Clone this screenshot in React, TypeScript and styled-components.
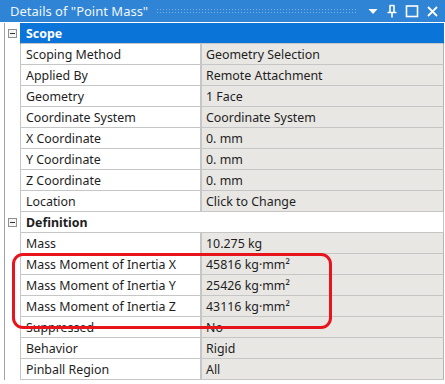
import styled, { createGlobalStyle } from "styled-components";

type Item =
  | { kind: "group"; label: string; selected?: boolean }
  | { kind: "prop"; name: string; value: string };

const ITEMS: Item[] = [
  { kind: "group", label: "Scope", selected: true },
  { kind: "prop", name: "Scoping Method", value: "Geometry Selection" },
  { kind: "prop", name: "Applied By", value: "Remote Attachment" },
  { kind: "prop", name: "Geometry", value: "1 Face" },
  { kind: "prop", name: "Coordinate System", value: "Coordinate System" },
  { kind: "prop", name: "X Coordinate", value: "0. mm" },
  { kind: "prop", name: "Y Coordinate", value: "0. mm" },
  { kind: "prop", name: "Z Coordinate", value: "0. mm" },
  { kind: "prop", name: "Location", value: "Click to Change" },
  { kind: "group", label: "Definition" },
  { kind: "prop", name: "Mass", value: "10.275 kg" },
  { kind: "prop", name: "Mass Moment of Inertia X", value: "45816 kg·mm²" },
  { kind: "prop", name: "Mass Moment of Inertia Y", value: "25426 kg·mm²" },
  { kind: "prop", name: "Mass Moment of Inertia Z", value: "43116 kg·mm²" },
  { kind: "prop", name: "Suppressed", value: "No" },
  { kind: "prop", name: "Behavior", value: "Rigid" },
  { kind: "prop", name: "Pinball Region", value: "All" },
];

export default function App() {
  return <>
    <GlobalStyle />
    <Panel>
      <TitleBar>
        <Title>Details of "Point Mass"</Title>
        <Grip />
        <TitleButtons>
          <svg width="12" height="12" viewBox="0 0 12 12">
            <path d="M1.5 4 L10.5 4 L6 9 Z" fill="#fff" />
          </svg>
          <svg width="12" height="14" viewBox="0 0 12 14">
            <path d="M3.5 1.5 H8.5 M4 1.5 V8 M8 1.5 V8 M1.5 8.5 H10.5 M6 8.5 V13.5" stroke="#fff" strokeWidth="1.6" fill="none" />
          </svg>
          <svg width="14" height="14" viewBox="0 0 14 14">
            <rect x="1.5" y="2" width="11" height="10.5" stroke="#fff" strokeWidth="1.6" fill="none" />
          </svg>
          <svg width="13" height="13" viewBox="0 0 13 13">
            <path d="M2 2 L11 11 M11 2 L2 11" stroke="#fff" strokeWidth="1.8" />
          </svg>
        </TitleButtons>
      </TitleBar>

      <Table>
        {ITEMS.map((item, i) => item.kind === "group"
          ? <Row key={i}>
              <Gutter><Toggle /></Gutter>
              <GroupCell selected={!!item.selected}>{item.label}</GroupCell>
            </Row>
          : <Row key={i}>
              <Gutter />
              <NameCell>{item.name}</NameCell>
              <ValueCell>{item.value}</ValueCell>
            </Row>
        )}
      </Table>

      <Highlight />
    </Panel>
  </>;
}

const GlobalStyle = createGlobalStyle`
  body {
    margin: 0;
    background: #fff;
    font-family: "Noto Sans", "Open Sans", sans-serif;
  }
`;

const Panel = styled.div`
  position: relative;
  width: 445px;
  height: 384px;
  background: #fff;
  overflow: hidden;
`;

const TitleBar = styled.div`
  height: 22px;
  background: #2f84d5;
  display: flex;
  align-items: center;
  padding: 0 6px 0 10px;
  gap: 8px;
`;

const Title = styled.div`
  color: #eef5fc;
  font-size: 13px;
  white-space: nowrap;
`;

const Grip = styled.div`
  flex: 1;
  height: 6px;
  margin-right: 2px;
  background-image: radial-gradient(circle, rgba(255, 255, 255, 0.35) 0.8px, transparent 1px);
  background-size: 3px 3px;
`;

const TitleButtons = styled.div`
  display: flex;
  align-items: center;
  gap: 7px;
`;

const Table = styled.div`
  margin-top: 1px;
  display: flex;
  flex-direction: column;
`;

const Row = styled.div`
  display: grid;
  grid-template-columns: 20px 182px 1fr;
  height: 21px;
  margin-right: 1px;
`;

const Gutter = styled.div`
  position: relative;
  display: flex;
  align-items: center;
  border-left: 1px solid #a4a4a4;
  margin-left: 4px;
`;

const Toggle = styled.div`
  position: relative;
  width: 9px;
  height: 9px;
  margin-left: 3px;
  box-sizing: border-box;
  border: 1px solid #909090;
  background: #f4f4f4;

  &::after {
    content: "";
    position: absolute;
    left: 1px;
    right: 1px;
    top: 3px;
    height: 1px;
    background: #333;
  }
`;

const Cell = styled.div`
  display: flex;
  align-items: center;
  font-size: 12.4px;
  color: #1e1e1e;
  white-space: nowrap;
  overflow: hidden;
  border-bottom: 1px solid #c6c6c6;
`;

const GroupCell = styled(Cell)<{ selected: boolean }>`
  grid-column: 2 / 4;
  padding-left: 5px;
  font-weight: 700;
  background: ${p => p.selected ? "#0a74d9" : "#fff"};
  color: ${p => p.selected ? "#fff" : "#1e1e1e"};
  border-left: 1px solid ${p => p.selected ? "#0a74d9" : "#c6c6c6"};
  border-right: 1px solid ${p => p.selected ? "#0a74d9" : "#c6c6c6"};
`;

const NameCell = styled(Cell)`
  padding-left: 5px;
  background: #fff;
  border-left: 1px solid #c6c6c6;
  border-right: 2px solid #c6c6c6;
`;

const ValueCell = styled(Cell)`
  padding-left: 4px;
  background: #e8e7e4;
  border-right: 1px solid #b4b4b4;
`;

const Highlight = styled.div`
  position: absolute;
  left: 12px;
  top: 253px;
  width: 320px;
  height: 76px;
  box-sizing: border-box;
  border: 3px solid #e8141c;
  border-radius: 11px;
  pointer-events: none;
`;
